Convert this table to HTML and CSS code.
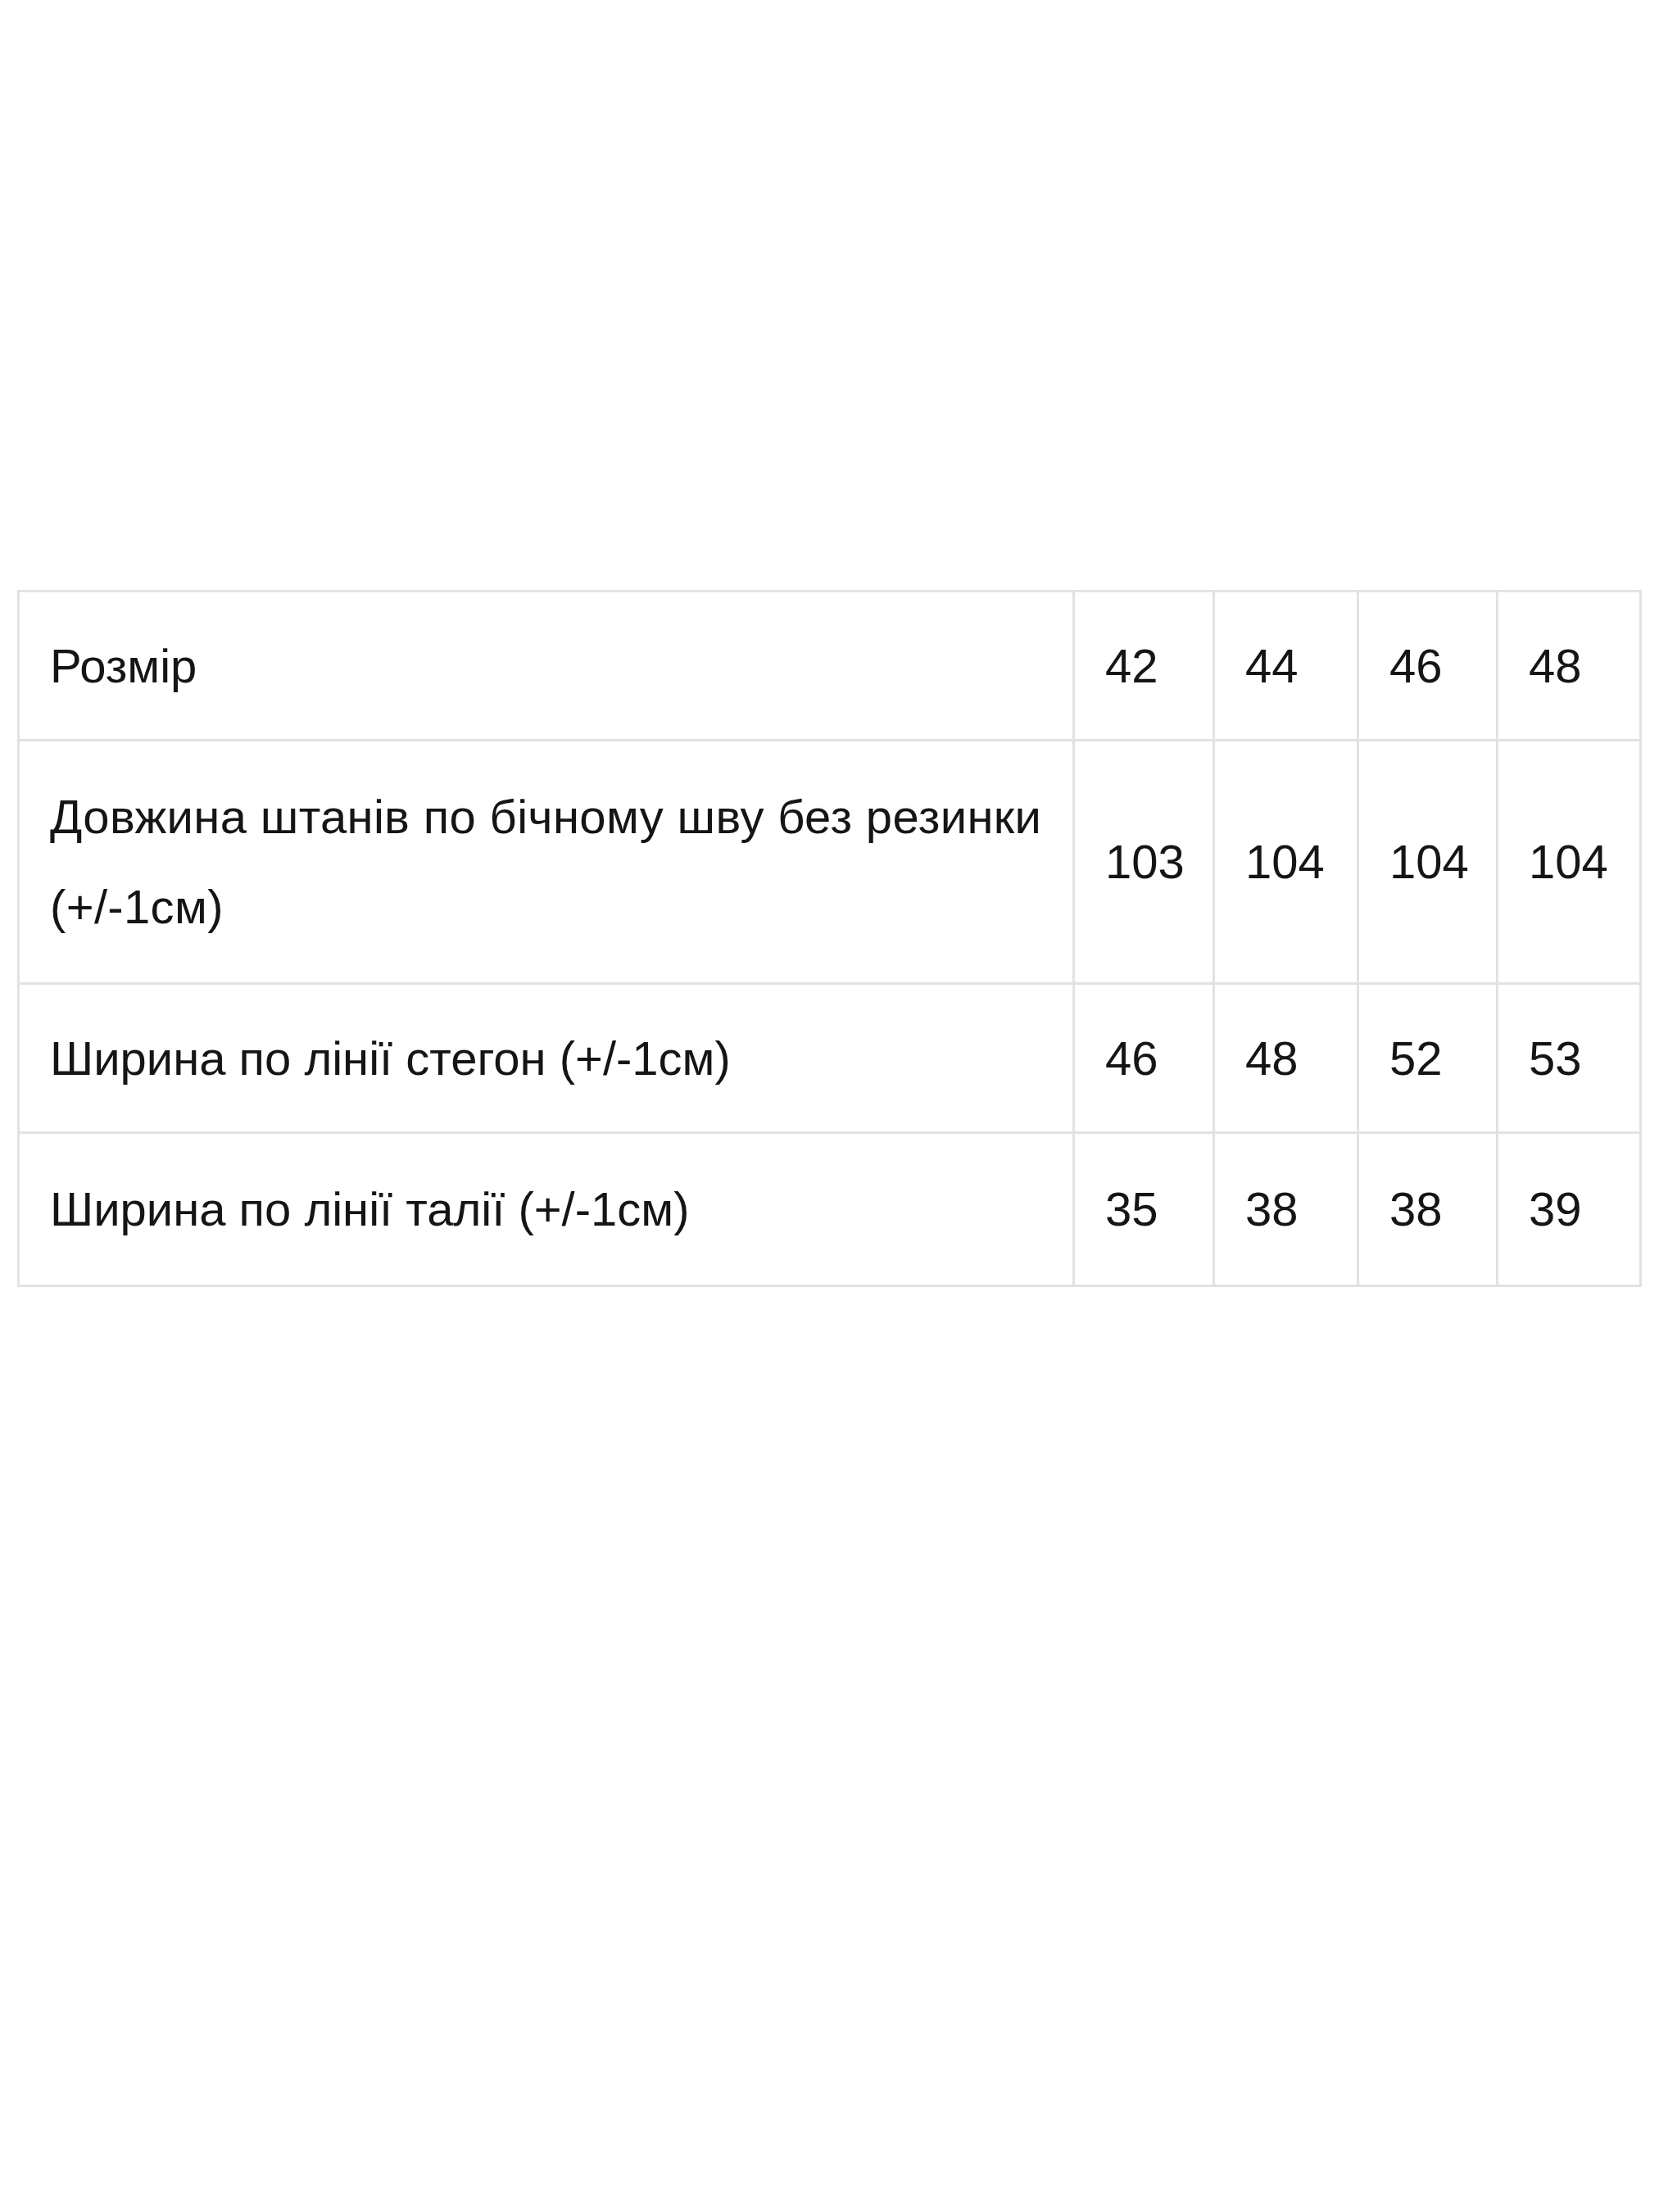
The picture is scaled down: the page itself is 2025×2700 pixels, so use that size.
FILE: index.html
```html
<!DOCTYPE html>
<html lang="uk">
<head>
<meta charset="utf-8">
<title>Таблиця розмірів</title>
<link rel="stylesheet" href="styles.css">
</head>
<body>
<main class="page">
  <table class="sizes">
    <colgroup>
      <col class="c-label">
      <col class="c-a">
      <col class="c-b">
      <col class="c-a2">
      <col class="c-b2">
    </colgroup>
    <tbody>
      <tr class="r-short">
        <td>Розмір</td><td>42</td><td>44</td><td>46</td><td>48</td>
      </tr>
      <tr class="r-tall">
        <td class="wide-label">Довжина штанів по бічному шву без резинки<br>(+/-1см)</td><td>103</td><td>104</td><td>104</td><td>104</td>
      </tr>
      <tr class="r-short">
        <td>Ширина по лінії стегон (+/-1см)</td><td>46</td><td>48</td><td>52</td><td>53</td>
      </tr>
      <tr class="r-last">
        <td>Ширина по лінії талії (+/-1см)</td><td>35</td><td>38</td><td>38</td><td>39</td>
      </tr>
    </tbody>
  </table>
</main>
</body>
</html>
```

FILE: styles.css
```css
html, body {
  margin: 0;
  padding: 0;
  background: #ffffff;
}

.page {
  padding: 720px 0 0 21px;
  min-height: 1980px;
}

.sizes {
  border-collapse: collapse;
  table-layout: fixed;
  width: 1980px;
  font-family: "Liberation Sans", Arial, sans-serif;
  font-size: 58px;
  line-height: 110px;
  color: #151515;
}

.c-label { width: 1288px; }
.c-a { width: 171px; }
.c-b { width: 176px; }
.c-a2 { width: 170px; }
.c-b2 { width: 175px; }

.sizes td {
  border: 3px solid #e2e2e2;
  padding: 0 8px 0 37px;
  vertical-align: middle;
  white-space: nowrap;
}

.sizes td.wide-label {
  letter-spacing: 0.35px;
}

.r-short td { height: 179px; }
.r-tall td { height: 294px; }
.r-last td { height: 184px; }
```
